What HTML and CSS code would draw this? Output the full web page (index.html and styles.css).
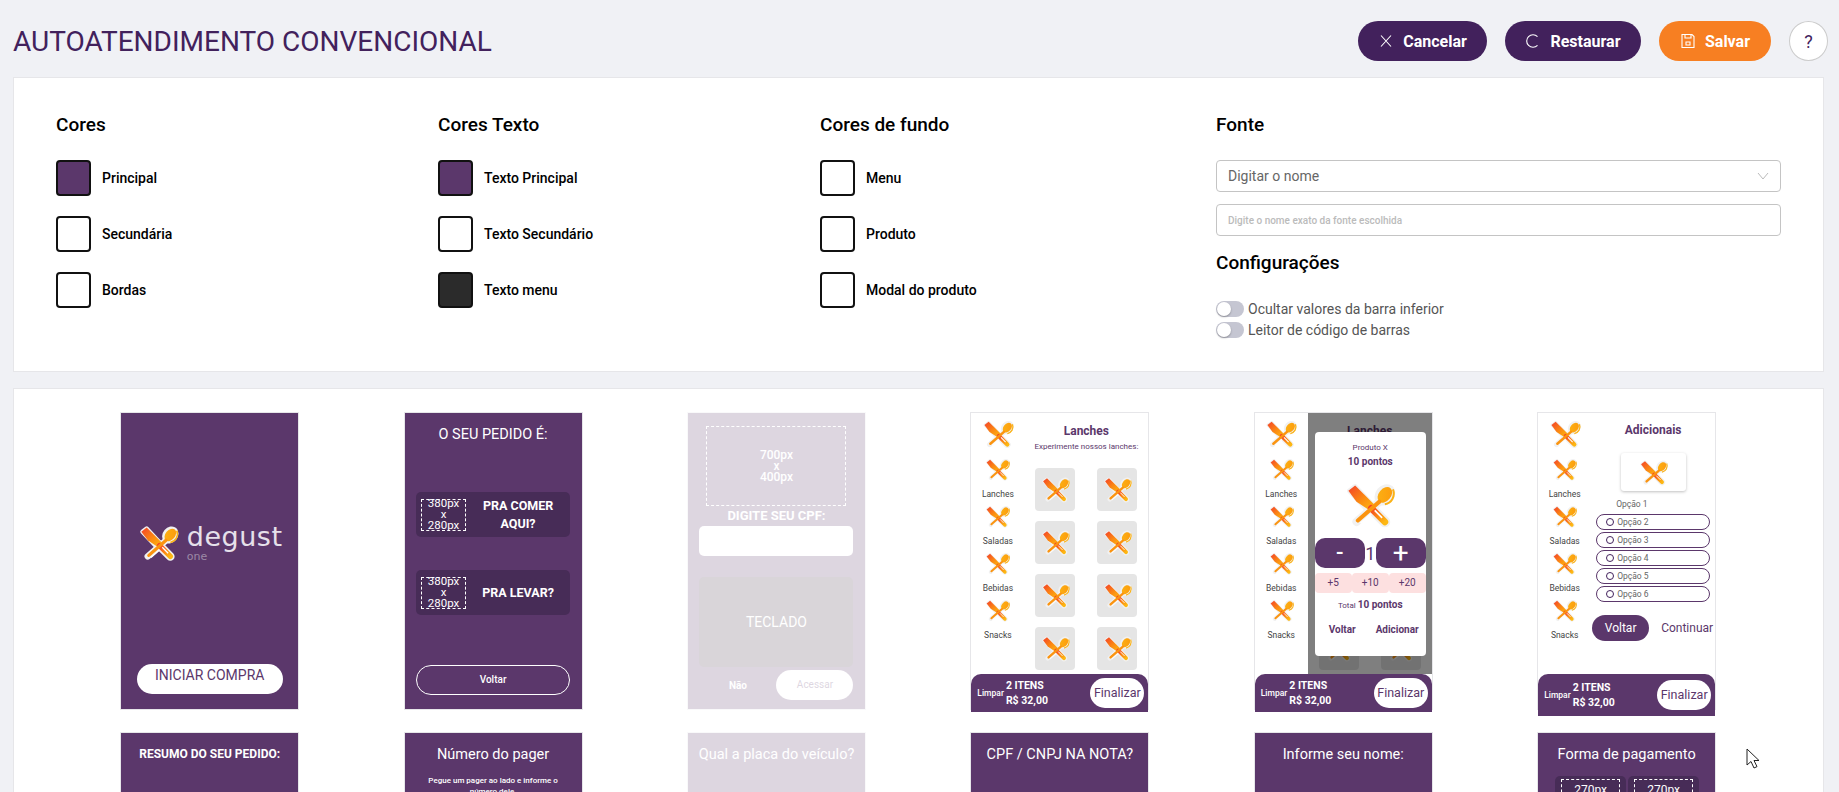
FILE: index.html
```html
<!DOCTYPE html>
<html lang="pt-BR">
<head>
    <meta charset="UTF-8">
    <title>Autoatendimento Convencional</title>
    <link rel="stylesheet" href="styles.css">
</head>
<body>

<svg class="icon-defs" width="0" height="0">
    <defs>
        <linearGradient id="knife-grad" x1="0" y1="0" x2="1" y2="1">
            <stop offset="0" stop-color="#f4402a"/>
            <stop offset="0.55" stop-color="#fb8a12"/>
            <stop offset="1" stop-color="#fdb813"/>
        </linearGradient>
        <linearGradient id="spoon-grad" x1="1" y1="0" x2="0" y2="1">
            <stop offset="0" stop-color="#fd9a0c"/>
            <stop offset="1" stop-color="#fbb215"/>
        </linearGradient>
        <symbol id="degust" viewBox="0 0 40 33">
            <g fill="none" stroke="#f1f1f1" stroke-linecap="round" stroke-linejoin="round">
                <path d="M5 6 9 3 22 17 19 21Z" fill="#f1f1f1" stroke-width="4"/>
                <path d="M20 18 31 29" stroke-width="8"/>
                <ellipse cx="31" cy="9" rx="5.5" ry="7" transform="rotate(40 31 9)" fill="#f1f1f1" stroke-width="3"/>
                <path d="M27 14 10 29" stroke-width="6"/>
            </g>
            <path d="M4 6 9 2 23 16 19 20 10 14Z" fill="url(#knife-grad)"/>
            <path d="M21 19 31 29" stroke="url(#knife-grad)" stroke-width="5" stroke-linecap="round"/>
            <path d="M23.5 20.5 29 26" stroke="#fff" stroke-width="1.2"/>
            <ellipse cx="31" cy="9" rx="4.5" ry="6.5" transform="rotate(40 31 9)" fill="url(#spoon-grad)"/>
            <path d="M27 14 11 28" stroke="#fb9410" stroke-width="3" stroke-linecap="round"/>
            <path d="M37 5C39 10 36 15 31 16" fill="none" stroke="#fbb215" stroke-width="1.5"/>
            <path d="M21 23 13 30" stroke="#fff" stroke-width="1.2"/>
        </symbol>
    </defs>
</svg>

<header class="top-bar">
    <h1 class="page-title">AUTOATENDIMENTO CONVENCIONAL</h1>
    <div class="top-actions">
        <a href="#" class="btn btn-dark btn-cancel">
            <svg class="btn-icon" viewBox="0 0 16 16"><path d="M3 2.5 13 13.5M13 2.5 3 13.5"/></svg>
            Cancelar
        </a>
        <a href="#" class="btn btn-dark btn-restore">
            <svg class="btn-icon" viewBox="0 0 16 16"><path d="M12.5 3.6A6.3 6.3 0 1 0 12.5 12.4"/></svg>
            Restaurar
        </a>
        <a href="#" class="btn btn-orange btn-save">
            <svg class="btn-icon" viewBox="0 0 16 16"><path d="M2 1.5H12L14 3.5V14.5H2ZM5 1.5V5H11V1.5M6 9H10V12H6Z"/></svg>
            Salvar
        </a>
        <a href="#" class="btn-help">?</a>
    </div>
</header>

<section class="card settings">
    <div class="color-col">
        <h2>Cores</h2>
        <div class="color-row"><span class="swatch swatch-purple"></span>Principal</div>
        <div class="color-row"><span class="swatch"></span>Secundária</div>
        <div class="color-row"><span class="swatch"></span>Bordas</div>
    </div>
    <div class="color-col">
        <h2>Cores Texto</h2>
        <div class="color-row"><span class="swatch swatch-purple"></span>Texto Principal</div>
        <div class="color-row"><span class="swatch"></span>Texto Secundário</div>
        <div class="color-row"><span class="swatch swatch-dark"></span>Texto menu</div>
    </div>
    <div class="color-col">
        <h2>Cores de fundo</h2>
        <div class="color-row"><span class="swatch"></span>Menu</div>
        <div class="color-row"><span class="swatch"></span>Produto</div>
        <div class="color-row"><span class="swatch"></span>Modal do produto</div>
    </div>
    <div class="font-col">
        <h2>Fonte</h2>
        <div class="field field-select">
            Digitar o nome
            <svg class="chevron" viewBox="0 0 12 8"><path d="M1 1 6 7 11 1"/></svg>
        </div>
        <div class="field field-hint">Digite o nome exato da fonte escolhida</div>
        <h2 class="config-title">Configurações</h2>
        <div class="toggle-row"><span class="toggle"></span>Ocultar valores da barra inferior</div>
        <div class="toggle-row"><span class="toggle"></span>Leitor de código de barras</div>
    </div>
</section>

<section class="card previews">
    <!-- primeira linha -->
    <div class="phone phone-purple phone-start">
        <div class="logo">
            <svg class="logo-icon"><use href="#degust"/></svg>
            <div class="logo-text">
                <span class="logo-name">degust</span>
                <span class="logo-sub">one</span>
            </div>
        </div>
        <a href="#" class="start-btn">INICIAR COMPRA</a>
    </div>

    <div class="phone phone-purple phone-order">
        <div class="phone-title">O SEU PEDIDO É:</div>
        <div class="order-option order-first">
            <div class="placeholder-box">380px<br>x<br>280px</div>
            <div class="order-label">PRA COMER AQUI?</div>
        </div>
        <div class="order-option">
            <div class="placeholder-box">380px<br>x<br>280px</div>
            <div class="order-label">PRA LEVAR?</div>
        </div>
        <a href="#" class="outline-btn">Voltar</a>
    </div>

    <div class="phone phone-purple phone-faded phone-cpf">
        <div class="placeholder-box placeholder-wide">700px<br>x<br>400px</div>
        <div class="cpf-label">DIGITE SEU CPF:</div>
        <div class="cpf-input"></div>
        <div class="keyboard">TECLADO</div>
        <div class="cpf-actions">
            <span class="cpf-no">Não</span>
            <span class="cpf-go">Acessar</span>
        </div>
    </div>

    <div class="phone phone-white">
        <div class="phone-body">
            <div class="side-menu">
                <svg class="side-logo"><use href="#degust"/></svg>
                <div class="side-item"><svg class="side-icon"><use href="#degust"/></svg>Lanches</div>
                <div class="side-item"><svg class="side-icon"><use href="#degust"/></svg>Saladas</div>
                <div class="side-item"><svg class="side-icon"><use href="#degust"/></svg>Bebidas</div>
                <div class="side-item"><svg class="side-icon"><use href="#degust"/></svg>Snacks</div>
            </div>
            <div class="main-list">
                <div class="list-title">Lanches</div>
                <div class="list-sub">Experimente nossos lanches:</div>
                <div class="tile-grid">
                    <div class="tile"><svg class="tile-icon"><use href="#degust"/></svg></div>
                    <div class="tile"><svg class="tile-icon"><use href="#degust"/></svg></div>
                    <div class="tile"><svg class="tile-icon"><use href="#degust"/></svg></div>
                    <div class="tile"><svg class="tile-icon"><use href="#degust"/></svg></div>
                    <div class="tile"><svg class="tile-icon"><use href="#degust"/></svg></div>
                    <div class="tile"><svg class="tile-icon"><use href="#degust"/></svg></div>
                    <div class="tile"><svg class="tile-icon"><use href="#degust"/></svg></div>
                    <div class="tile"><svg class="tile-icon"><use href="#degust"/></svg></div>
                </div>
            </div>
        </div>
        <div class="cart-bar">
            <span class="cart-clear">Limpar</span>
            <div class="cart-info"><span>2 ITENS</span><span>R$ 32,00</span></div>
            <a href="#" class="cart-btn">Finalizar</a>
        </div>
    </div>

    <div class="phone phone-white">
        <div class="phone-body">
            <div class="side-menu">
                <svg class="side-logo"><use href="#degust"/></svg>
                <div class="side-item"><svg class="side-icon"><use href="#degust"/></svg>Lanches</div>
                <div class="side-item"><svg class="side-icon"><use href="#degust"/></svg>Saladas</div>
                <div class="side-item"><svg class="side-icon"><use href="#degust"/></svg>Bebidas</div>
                <div class="side-item"><svg class="side-icon"><use href="#degust"/></svg>Snacks</div>
            </div>
            <div class="main-list main-modal">
                <div class="list-title">Lanches</div>
                <div class="list-sub">Experimente nossos lanches:</div>
                <div class="tile-grid">
                    <div class="tile"><svg class="tile-icon"><use href="#degust"/></svg></div>
                    <div class="tile"><svg class="tile-icon"><use href="#degust"/></svg></div>
                    <div class="tile"><svg class="tile-icon"><use href="#degust"/></svg></div>
                    <div class="tile"><svg class="tile-icon"><use href="#degust"/></svg></div>
                    <div class="tile"><svg class="tile-icon"><use href="#degust"/></svg></div>
                    <div class="tile"><svg class="tile-icon"><use href="#degust"/></svg></div>
                    <div class="tile"><svg class="tile-icon"><use href="#degust"/></svg></div>
                    <div class="tile"><svg class="tile-icon"><use href="#degust"/></svg></div>
                </div>
                <div class="modal-overlay">
                    <div class="modal">
                        <div class="modal-name">Produto X</div>
                        <div class="modal-points">10 pontos</div>
                        <svg class="modal-icon"><use href="#degust"/></svg>
                        <div class="qty-row">
                            <span class="qty-btn">-</span>
                            <span class="qty-value">1</span>
                            <span class="qty-btn qty-plus">+</span>
                        </div>
                        <div class="quick-row">
                            <span>+5</span><span>+10</span><span>+20</span>
                        </div>
                        <div class="modal-total">Total <b>10 pontos</b></div>
                        <div class="modal-actions"><span>Voltar</span><span>Adicionar</span></div>
                    </div>
                </div>
            </div>
        </div>
        <div class="cart-bar">
            <span class="cart-clear">Limpar</span>
            <div class="cart-info"><span>2 ITENS</span><span>R$ 32,00</span></div>
            <a href="#" class="cart-btn">Finalizar</a>
        </div>
    </div>

    <div class="phone phone-white">
        <div class="phone-body">
            <div class="side-menu">
                <svg class="side-logo"><use href="#degust"/></svg>
                <div class="side-item"><svg class="side-icon"><use href="#degust"/></svg>Lanches</div>
                <div class="side-item"><svg class="side-icon"><use href="#degust"/></svg>Saladas</div>
                <div class="side-item"><svg class="side-icon"><use href="#degust"/></svg>Bebidas</div>
                <div class="side-item"><svg class="side-icon"><use href="#degust"/></svg>Snacks</div>
            </div>
            <div class="main-extras">
                <div class="extras-title">Adicionais</div>
                <div class="extras-image"><svg class="tile-icon"><use href="#degust"/></svg></div>
                <div class="extras-head">Opção 1</div>
                <div class="extra-option"><span class="radio"></span>Opção 2</div>
                <div class="extra-option"><span class="radio"></span>Opção 3</div>
                <div class="extra-option"><span class="radio"></span>Opção 4</div>
                <div class="extra-option"><span class="radio"></span>Opção 5</div>
                <div class="extra-option"><span class="radio"></span>Opção 6</div>
                <div class="extras-actions">
                    <a href="#" class="extras-back">Voltar</a>
                    <a href="#" class="extras-next">Continuar</a>
                </div>
            </div>
        </div>
        <div class="cart-bar cart-bar-tall">
            <span class="cart-clear">Limpar</span>
            <div class="cart-info"><span>2 ITENS</span><span>R$ 32,00</span></div>
            <a href="#" class="cart-btn">Finalizar</a>
        </div>
    </div>

    <!-- segunda linha -->
    <div class="phone phone-purple">
        <div class="phone-title phone-title-bold">RESUMO DO SEU PEDIDO:</div>
    </div>
    <div class="phone phone-purple">
        <div class="phone-title">Número do pager</div>
        <div class="pager-text">Pegue um pager ao lado e informe o número dele.</div>
    </div>
    <div class="phone phone-purple phone-faded">
        <div class="phone-title">Qual a placa do veículo?</div>
    </div>
    <div class="phone phone-purple">
        <div class="phone-title">CPF / CNPJ NA NOTA?</div>
    </div>
    <div class="phone phone-purple">
        <div class="phone-title">Informe seu nome:</div>
    </div>
    <div class="phone phone-purple">
        <div class="phone-title">Forma de pagamento</div>
        <div class="pay-row">
            <div class="pay-option"><div class="placeholder-box placeholder-pay">270px</div></div>
            <div class="pay-option"><div class="placeholder-box placeholder-pay">270px</div></div>
        </div>
    </div>
</section>

<svg class="cursor" viewBox="0 0 14 21"><path d="M1 1V17L5 13.5 8 20 11 18.6 8 12.5H13Z"/></svg>

</body>
</html>
```

FILE: styles.css
```css
html, body {
    height: 100%;
    overflow: hidden;
}
body {
    margin: 0;
    padding: 0 15px 0 13px;
    box-sizing: border-box;
    background-color: #f0f1f5;
    font-family: Roboto, sans-serif;
    color: #000;
}
a {
    text-decoration: none;
}
.icon-defs {
    position: absolute;
}

/* topo */
.top-bar {
    display: flex;
    align-items: center;
    justify-content: space-between;
    height: 77px;
    padding-top: 5px;
    box-sizing: border-box;
}
.page-title {
    margin: 0;
    font-family: "Liberation Sans Narrow", Roboto, sans-serif;
    font-size: 28px;
    font-weight: 400;
    color: #42215c;
    white-space: nowrap;
}
.top-actions {
    display: flex;
    align-items: center;
    gap: 18px;
    margin-right: -4px;
}
.btn {
    display: flex;
    align-items: center;
    justify-content: center;
    gap: 9px;
    height: 40px;
    border-radius: 20px;
    color: white;
    font-size: 16px;
    font-weight: 700;
}
.btn-dark {
    background-color: #42215c;
}
.btn-orange {
    background-color: #f77f22;
}
.btn-cancel {
    width: 129px;
}
.btn-restore {
    width: 136px;
}
.btn-save {
    width: 112px;
}
.btn-icon {
    width: 16px;
    height: 16px;
    fill: none;
    stroke: white;
    stroke-width: 1.1;
}
.btn-help {
    display: flex;
    align-items: center;
    justify-content: center;
    width: 39px;
    height: 40px;
    box-sizing: border-box;
    border: 1px solid #ccc;
    border-radius: 50%;
    background-color: white;
    color: #42215c;
    font-size: 18px;
}

/* cartoes */
.card {
    background-color: white;
    border: 1px solid #e6e6e9;
}
.settings {
    display: grid;
    grid-template-columns: 382px 382px 396px 1fr;
    height: 295px;
    box-sizing: border-box;
    padding: 35px 42px 0;
    margin-bottom: 16px;
}
.settings h2 {
    margin: 0 0 23px;
    font-size: 19px;
    line-height: 24px;
    font-weight: 500;
}
.color-row {
    display: flex;
    align-items: center;
    gap: 11px;
    height: 36px;
    margin-bottom: 20px;
    font-size: 14px;
    font-weight: 500;
}
.swatch {
    width: 35px;
    height: 36px;
    box-sizing: border-box;
    border: 2px solid #111;
    border-radius: 4px;
    background-color: white;
}
.swatch-purple {
    background-color: #5b376b;
}
.swatch-dark {
    background-color: #2b2b2b;
}
.field {
    display: flex;
    align-items: center;
    justify-content: space-between;
    height: 32px;
    box-sizing: border-box;
    padding: 0 11px;
    border: 1px solid #c4c4c4;
    border-radius: 4px;
    color: #666;
    font-size: 14px;
    margin-bottom: 12px;
}
.field-hint {
    font-size: 10px;
    font-weight: 500;
    color: #bbb;
    margin-bottom: 0;
}
.chevron {
    width: 12px;
    height: 8px;
    fill: none;
    stroke: #bbb;
}
.settings .config-title {
    margin: 15px 0 26px;
}
.toggle-row {
    display: flex;
    align-items: center;
    gap: 4px;
    height: 16px;
    margin-bottom: 5px;
    font-size: 14px;
    color: #555;
}
.toggle {
    position: relative;
    width: 28px;
    height: 16px;
    border-radius: 8px;
    background-color: #c5c6d2;
}
.toggle::after {
    content: "";
    position: absolute;
    left: 1px;
    top: 1px;
    width: 14px;
    height: 14px;
    border-radius: 50%;
    background-color: white;
    box-shadow: 0 1px 2px rgba(0, 0, 0, .3);
}

/* telas de exemplo */
.previews {
    display: grid;
    grid-template-columns: repeat(6, 283.4px);
    grid-auto-rows: 298px;
    row-gap: 22px;
    justify-items: center;
    padding: 23px 0 0 54px;
}
.phone {
    display: flex;
    flex-direction: column;
    width: 179px;
    height: 298px;
    box-sizing: border-box;
    border: 1px solid #e6e6e9;
    color: white;
}
.phone-purple {
    background-color: #5b376b;
}
.phone-faded {
    opacity: .2;
}
.phone-white {
    background-color: white;
    color: #5b376b;
}
.phone-title {
    margin-top: 13px;
    text-align: center;
    font-size: 14.5px;
    line-height: 18px;
}
.phone-title-bold {
    font-size: 12px;
    font-weight: 700;
    margin-top: 12px;
}
.placeholder-box {
    display: flex;
    flex: none;
    align-items: center;
    justify-content: center;
    text-align: center;
    width: 45px;
    height: 32px;
    box-sizing: border-box;
    border: 1px dashed white;
    font-size: 11.5px;
    line-height: 11px;
}

/* tela inicial */
.phone-start {
    align-items: center;
}
.logo {
    display: flex;
    gap: 7px;
    margin: 110px 0 0 0;
    height: 40px;
}
.logo-icon {
    width: 43px;
    height: 36px;
    margin-top: 2px;
}
.logo-text {
    display: flex;
    flex-direction: column;
    font-family: "DejaVu Sans", sans-serif;
    color: #e6e0ea;
}
.logo-name {
    font-size: 27px;
    line-height: 28px;
    letter-spacing: .5px;
    font-weight: 400;
}
.logo-sub {
    font-size: 11px;
    line-height: 11px;
    color: #9c8aa6;
}
.start-btn {
    display: block;
    width: 146px;
    height: 30px;
    margin-top: 101px;
    border-radius: 15px;
    background-color: white;
    color: #5b376b;
    text-align: center;
    font-size: 14px;
    line-height: 22px;
}

/* onde comer */
.phone-order {
    align-items: center;
}
.order-option {
    display: flex;
    align-items: center;
    gap: 5px;
    width: 154px;
    height: 45px;
    box-sizing: border-box;
    padding: 0 5px;
    margin-top: 33px;
    border-radius: 5px;
    background-color: #472c57;
}
.order-first {
    margin-top: 48px;
}
.order-label {
    flex: 1;
    padding: 0 6px;
    text-align: center;
    font-size: 12.5px;
    line-height: 18px;
    font-weight: 700;
}
.outline-btn {
    display: block;
    width: 154px;
    height: 30px;
    box-sizing: border-box;
    margin-top: 50px;
    border: 1px solid white;
    border-radius: 15px;
    color: white;
    text-align: center;
    font-size: 10px;
    font-weight: 500;
    line-height: 28px;
}

/* cpf */
.phone-cpf {
    align-items: center;
}
.placeholder-wide {
    width: 140px;
    height: 80px;
    margin-top: 13px;
    font-size: 12px;
    font-weight: 500;
}
.cpf-label {
    margin-top: 3px;
    font-size: 13px;
    line-height: 14px;
    font-weight: 700;
}
.cpf-input {
    width: 154px;
    height: 30px;
    margin-top: 3px;
    border-radius: 5px;
    background-color: white;
}
.keyboard {
    display: flex;
    align-items: center;
    justify-content: center;
    width: 154px;
    height: 90px;
    margin-top: 21px;
    border-radius: 5px;
    background-color: #443244;
    font-size: 14px;
}
.cpf-actions {
    display: flex;
    align-items: center;
    width: 154px;
    height: 30px;
    margin-top: 3px;
    font-size: 10px;
}
.cpf-no {
    width: 77px;
    text-align: center;
    font-weight: 700;
}
.cpf-go {
    width: 77px;
    height: 30px;
    border-radius: 15px;
    background-color: white;
    color: #5b376b;
    text-align: center;
    line-height: 30px;
}

/* cardapio */
.phone-body {
    display: flex;
    flex: none;
    height: 261px;
}
.side-menu {
    display: flex;
    flex: none;
    flex-direction: column;
    align-items: center;
    width: 53px;
    padding-top: 7px;
    color: #444;
    font-size: 8.5px;
}
.side-logo {
    flex: none;
    width: 34px;
    height: 28px;
    margin-bottom: 10px;
}
.side-item {
    display: flex;
    flex-direction: column;
    align-items: center;
    gap: 8px;
    height: 41px;
    margin-bottom: 6px;
    line-height: 10px;
}
.side-icon {
    flex: none;
    width: 27px;
    height: 23px;
}
.main-list {
    position: relative;
    flex: 1;
    overflow: hidden;
    text-align: center;
}
.list-title {
    margin-top: 11px;
    font-size: 12px;
    line-height: 14px;
    font-weight: 700;
}
.list-sub {
    margin-top: 4px;
    font-size: 8px;
    line-height: 10px;
}
.tile-grid {
    display: grid;
    grid-template-columns: 40px 40px;
    grid-auto-rows: 43px;
    justify-content: center;
    gap: 10px 22px;
    margin-top: 16px;
}
.tile {
    display: flex;
    align-items: center;
    justify-content: center;
    border-radius: 4px;
    background-color: #e5e5e5;
}
.tile-icon {
    width: 31px;
    height: 27px;
}

/* modal do produto */
.modal-overlay {
    position: absolute;
    inset: 0;
    padding: 19px 6px 0 7px;
    background-color: rgba(0, 0, 0, .5);
}
.modal {
    display: flex;
    flex-direction: column;
    align-items: center;
    height: 224px;
    box-sizing: border-box;
    padding-top: 11px;
    border-radius: 4px;
    background-color: white;
}
.modal-name {
    font-size: 8px;
    line-height: 10px;
}
.modal-points {
    margin-top: 3px;
    font-size: 10px;
    line-height: 12px;
    font-weight: 700;
}
.modal-icon {
    flex: none;
    width: 54px;
    height: 46px;
    margin-top: 14px;
}
.qty-row {
    display: flex;
    align-items: center;
    justify-content: space-between;
    width: 100%;
    margin-top: 10px;
}
.qty-btn {
    width: 50px;
    height: 30px;
    border-radius: 10px;
    background-color: #5b376b;
    color: white;
    font-size: 22px;
    font-weight: 500;
    line-height: 29px;
}
.qty-plus {
    font-size: 28px;
    font-weight: 400;
}
.qty-value {
    font-size: 18px;
}
.quick-row {
    display: flex;
    justify-content: space-between;
    width: 100%;
    margin-top: 5px;
}
.quick-row span {
    width: 37px;
    height: 20px;
    border-radius: 4px;
    background-color: #fde0e0;
    font-size: 10px;
    line-height: 20px;
}
.modal-total {
    margin-top: 6px;
    font-size: 8px;
    line-height: 12px;
}
.modal-total b {
    font-size: 10px;
}
.modal-actions {
    display: flex;
    justify-content: space-between;
    width: 100%;
    box-sizing: border-box;
    padding: 0 7px 0 14px;
    margin-top: 12px;
    font-size: 10px;
    line-height: 12px;
    font-weight: 700;
}

/* adicionais */
.main-extras {
    flex: 1;
    display: flex;
    flex-direction: column;
    align-items: center;
    color: #5b376b;
}
.extras-title {
    margin-top: 10px;
    font-size: 12px;
    line-height: 14px;
    font-weight: 700;
}
.extras-image {
    display: flex;
    align-items: center;
    justify-content: center;
    width: 65px;
    height: 38px;
    margin-top: 16px;
    border-radius: 3px;
    box-shadow: 0 1px 3px rgba(0, 0, 0, .25);
}
.extras-head {
    align-self: flex-start;
    margin: 8px 0 5px 25px;
    font-size: 8.5px;
    line-height: 10px;
    color: #666;
}
.extra-option {
    display: flex;
    flex: none;
    align-items: center;
    gap: 3px;
    width: 114px;
    height: 16px;
    box-sizing: border-box;
    padding-left: 9px;
    margin-bottom: 2px;
    border: 1px solid #5b376b;
    border-radius: 8px;
    font-size: 8.5px;
    color: #666;
}
.radio {
    width: 8px;
    height: 8px;
    box-sizing: border-box;
    border: 1px solid #42215c;
    border-radius: 50%;
}
.extras-actions {
    display: flex;
    align-items: center;
    gap: 12px;
    align-self: flex-start;
    margin: 11px 0 0 1px;
    font-size: 12px;
}
.extras-back {
    width: 57px;
    height: 26px;
    border-radius: 13px;
    background-color: #5b376b;
    color: white;
    text-align: center;
    line-height: 26px;
}
.extras-next {
    color: #5b376b;
    white-space: nowrap;
}

/* barra inferior */
.cart-bar {
    display: flex;
    flex: none;
    align-items: center;
    height: 38px;
    box-sizing: border-box;
    padding: 0 4px 0 6px;
    border-radius: 10px 10px 0 0;
    background-color: #5b376b;
    color: white;
}
.cart-bar-tall {
    height: 42px;
    padding-top: 0;
}
.cart-clear {
    font-size: 8.5px;
    font-weight: 500;
    margin-right: 2px;
}
.cart-info {
    display: flex;
    flex-direction: column;
    gap: 4px;
    flex: 1;
    font-size: 10.5px;
    line-height: 11px;
    font-weight: 700;
}
.cart-btn {
    width: 54px;
    height: 30px;
    border-radius: 15px;
    background-color: white;
    color: #5b376b;
    text-align: center;
    font-size: 12.5px;
    line-height: 30px;
}

/* segunda linha */
.pager-text {
    margin: 11px auto 0;
    width: 140px;
    text-align: center;
    font-size: 8px;
    font-weight: 500;
    line-height: 11px;
}
.pay-row {
    display: flex;
    gap: 2px;
    margin: 12px 0 0 17px;
}
.pay-option {
    width: 71px;
    height: 60px;
    padding: 3px 6px;
    box-sizing: border-box;
    border-radius: 5px;
    background-color: #472c57;
}
.placeholder-pay {
    width: 100%;
    height: 50px;
    align-items: flex-start;
    padding-top: 5px;
    font-size: 12px;
}

/* cursor do mouse */
.cursor {
    position: absolute;
    left: 1746px;
    top: 748px;
    width: 14px;
    height: 21px;
    fill: white;
    stroke: #222;
    stroke-width: 1;
}
```
